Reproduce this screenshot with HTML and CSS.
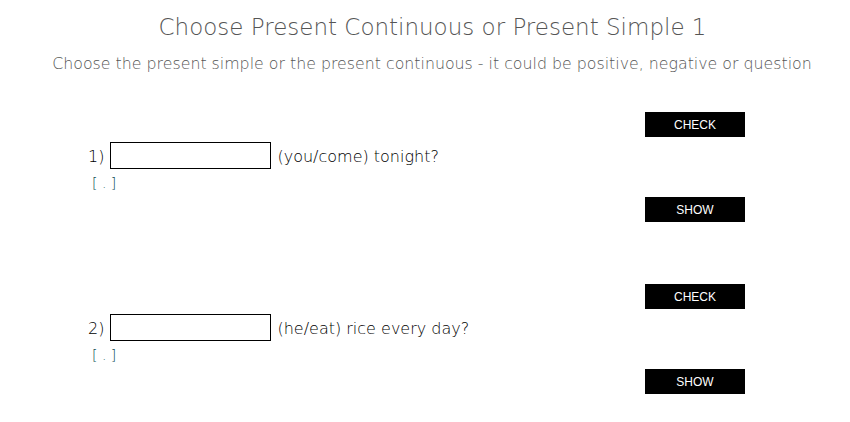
FILE: index.html
```html
<!DOCTYPE html>
<html lang="en">
<head>
    <meta charset="UTF-8">
    <meta name="viewport" content="width=device-width, initial-scale=1.0">
    <title>Choose Present Continuous or Present Simple 1</title>
    <link rel="stylesheet" href="styles.css">
</head>
<body>
    <div class="page">
        <h1>Choose Present Continuous or Present Simple 1</h1>
        <p class="intro">Choose the present simple or the present continuous - it could be positive, negative or question</p>

        <div class="exercise">
            <div class="question">
                <div class="task">
                    <div class="line">
                        <span class="num">1)</span>
                        <input type="text" class="gap">
                        <span>(you/come) tonight?</span>
                    </div>
                    <div class="answer">[ . ]</div>
                </div>
                <div class="actions">
                    <button>CHECK</button>
                    <button>SHOW</button>
                </div>
            </div>

            <div class="question">
                <div class="task">
                    <div class="line">
                        <span class="num">2)</span>
                        <input type="text" class="gap">
                        <span>(he/eat) rice every day?</span>
                    </div>
                    <div class="answer">[ . ]</div>
                </div>
                <div class="actions">
                    <button>CHECK</button>
                    <button>SHOW</button>
                </div>
            </div>
        </div>
    </div>
</body>
</html>
```

FILE: styles.css
```css
body {
    font-family: "DejaVu Sans", sans-serif;
    font-weight: 200;
    margin: 0;
    background: #fff;
}
.page {
    width: 850px;
}
h1 {
    font-weight: 200;
    font-size: 23px;
    color: #555;
    text-align: center;
    margin: 10px 0 0;
    padding-left: 15px;
    line-height: 34px;
}
.intro {
    font-size: 15.8px;
    color: #555;
    text-align: center;
    margin: 10px 0 0;
    padding-left: 14px;
    line-height: 20px;
}
.exercise {
    display: flex;
    flex-direction: column;
    gap: 62px;
    margin-top: 38px;
    padding-left: 88px;
    width: 657px;
}
.question {
    display: flex;
    justify-content: space-between;
    align-items: center;
}
.line {
    display: flex;
    align-items: center;
    font-size: 16px;
    color: #000;
}
.num {
    margin-right: 6px;
}
.gap {
    width: 161px;
    height: 27px;
    box-sizing: border-box;
    border: 1px solid #000;
    border-radius: 0;
    padding: 0 4px;
    margin: -2px 6px 0 0;
}
.answer {
    color: #0a4a52;
    font-size: 14px;
    margin: 6px 0 0 4px;
}
.actions {
    display: flex;
    flex-direction: column;
    gap: 60px;
}
button {
    width: 100px;
    height: 25px;
    background-color: #000;
    color: #fff;
    border: none;
    border-radius: 0;
    font-family: "Liberation Sans", Arial, sans-serif;
    font-size: 12px;
    padding: 0;
}
```
